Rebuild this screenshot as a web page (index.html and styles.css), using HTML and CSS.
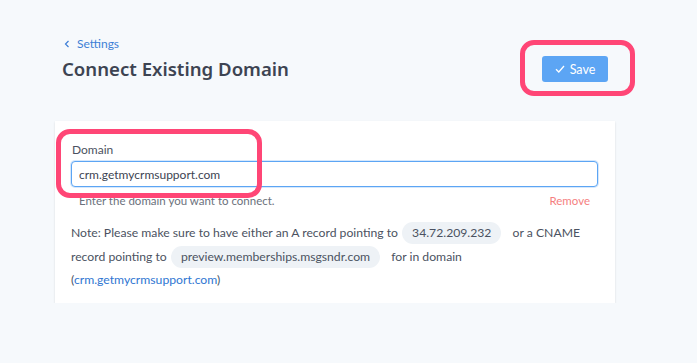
FILE: index.html
```html
<!DOCTYPE html>
<html lang="en">
<head>
    <meta charset="UTF-8">
    <title>Connect Existing Domain</title>
    <link rel="stylesheet" href="styles.css">
</head>
<body>
    <div class="page">
        <div class="header">
            <div class="header-left">
                <a class="back-link" href="#">
                    <svg width="8" height="8" viewBox="0 0 8 8"><path d="M5.5 1 L2.5 4 L5.5 7" fill="none" stroke="currentColor" stroke-width="1.2"/></svg>
                    Settings
                </a>
                <h1>Connect Existing Domain</h1>
            </div>
            <div class="save-wrap">
                <button class="save-btn">
                    <svg width="10" height="8" viewBox="0 0 10 8"><path d="M1 4.2 L3.8 7 L9 1" fill="none" stroke="#fff" stroke-width="1.3"/></svg>
                    Save
                </button>
                <span class="highlight save-highlight"></span>
            </div>
        </div>

        <div class="card">
            <div class="field">
                <label for="domain">Domain</label>
                <input id="domain" class="input-box" type="text" value="crm.getmycrmsupport.com">
                <span class="highlight field-highlight"></span>
            </div>
            <div class="help-row">
                <span class="help">Enter the domain you want to connect.</span>
                <a class="remove" href="#">Remove</a>
            </div>
            <p class="note">
                Note: Please make sure to have either an A record pointing to
                <span class="pill">34.72.209.232</span>
                or a CNAME record pointing to
                <span class="pill">preview.memberships.msgsndr.com</span>
                for in domain
                (<a class="domain-link" href="#">crm.getmycrmsupport.com</a>)
            </p>
        </div>
    </div>
</body>
</html>
```

FILE: styles.css
```css
body {
    margin: 0;
    background-color: #f6f9fc;
    font-family: Lato, "Noto Sans", Arial, sans-serif;
    color: #4b5261;
}
.page {
    padding: 36px 0 0 55px;
    width: 560px;
}
.header {
    display: flex;
    justify-content: space-between;
    align-items: flex-start;
}
.header-left {
    padding-left: 7px;
}
.back-link {
    display: flex;
    align-items: center;
    gap: 6px;
    color: #3d7fd6;
    text-decoration: none;
    font-size: 12px;
    padding-left: 1px;
}
h1 {
    margin: 5px 0 0;
    font-family: "Noto Sans", Arial, sans-serif;
    font-size: 18.6px;
    font-weight: 600;
    color: #3d4452;
}
.save-wrap {
    position: relative;
    margin: 20px 7px 0 0;
}
.save-btn {
    display: flex;
    align-items: center;
    gap: 5px;
    height: 26px;
    width: 66px;
    justify-content: center;
    border: none;
    border-radius: 3px;
    background-color: #5ca5f4;
    color: #fff;
    font-family: inherit;
    font-size: 12.5px;
}
.highlight {
    position: absolute;
    border: 5px solid #ff4676;
    border-radius: 14px;
}
.save-highlight {
    left: -22px;
    top: -16px;
    right: -27px;
    bottom: -14px;
}
.card {
    margin-top: 39px;
    background: #fff;
    box-shadow: 0 1px 2px rgba(0, 0, 0, 0.12);
    padding: 21px 17px 11px 16px;
}
.field {
    position: relative;
}
label {
    display: block;
    font-size: 12px;
    color: #4b5261;
    padding-left: 1px;
    margin-bottom: 4px;
}
.input-box {
    box-sizing: border-box;
    width: 100%;
    height: 26px;
    padding: 0 7px;
    border: 1px solid #5ca5f4;
    border-radius: 4px;
    box-shadow: 0 0 0 1px #d6e8fc;
    font-family: inherit;
    font-size: 12px;
    color: #3d4452;
    outline: none;
}
.field-highlight {
    left: -15px;
    top: -13px;
    width: 196px;
    bottom: -11px;
}
.help-row {
    display: flex;
    justify-content: space-between;
    margin-top: 7px;
    padding: 0 8px 0 8px;
    font-size: 11.5px;
}
.help {
    color: #6b717c;
}
.remove {
    color: #f57f7f;
    text-decoration: none;
}
.note {
    margin: 14px 0 0;
    font-size: 12.2px;
    line-height: 23.5px;
    color: #4b5261;
}
.pill {
    display: inline-block;
    background-color: #eef2f6;
    border-radius: 12px;
    padding: 0 10px;
    margin: 0 8px 0 1px;
    line-height: 22px;
}
.domain-link {
    color: #2f76d2;
    text-decoration: none;
}
```
